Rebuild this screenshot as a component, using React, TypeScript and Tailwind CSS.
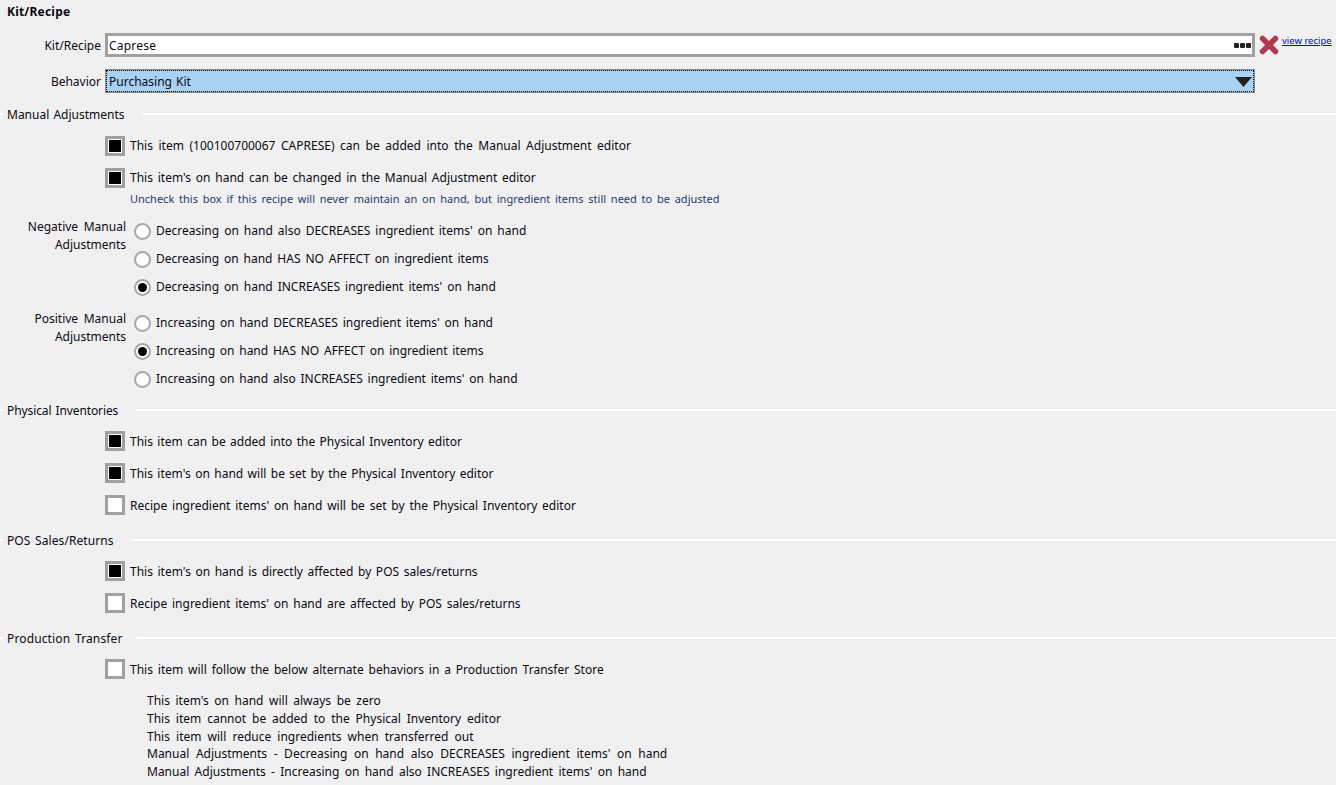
import type { ReactNode } from "react";

function SectionHeader({
  title,
  className,
  titleClass,
  lineClass = "ml-[17px]",
}: {
  title: string;
  className: string;
  titleClass: string;
  lineClass?: string;
}) {
  return (
    <div className={`flex h-5 items-center ${className}`}>
      <div className="h-[2px] w-[3px] bg-white" />
      <span className={`ml-1 shrink-0 pt-[2px] ${titleClass}`}>{title}</span>
      <div className={`h-[2px] flex-1 bg-white ${lineClass}`} />
    </div>
  );
}

function CheckRow({
  checked,
  textClass,
  children,
}: {
  checked?: boolean;
  textClass: string;
  children: ReactNode;
}) {
  return (
    <div className="flex h-8 items-center pl-[105px]">
      <div className="flex size-5 items-center justify-center border-[3px] border-[#a0a0a0] bg-white">
        {checked && <div className="size-3 bg-black" />}
      </div>
      <span className={`ml-[5px] ${textClass}`}>{children}</span>
    </div>
  );
}

function RadioRow({
  checked,
  textClass,
  children,
}: {
  checked?: boolean;
  textClass: string;
  children: ReactNode;
}) {
  return (
    <div className="flex h-7 items-center">
      <div className="flex size-[17px] items-center justify-center rounded-full border-2 border-[#a8a8a8] bg-white">
        {checked && <div className="size-[9px] rounded-full bg-black" />}
      </div>
      <span className={`ml-[5px] ${textClass}`}>{children}</span>
    </div>
  );
}

function RadioGroup({
  label,
  options,
  selected,
  className,
}: {
  label: string[];
  options: { text: string; textClass: string }[];
  selected: number;
  className: string;
}) {
  return (
    <div className={`flex ${className}`}>
      <div className="w-[126px] pt-[1px] text-right leading-[18px] [word-spacing:2.5px]">
        {label.map((line) => (
          <div key={line}>{line}</div>
        ))}
      </div>
      <div className="ml-2 flex flex-col">
        {options.map((option, i) => (
          <RadioRow key={option.text} checked={i === selected} textClass={option.textClass}>
            {option.text}
          </RadioRow>
        ))}
      </div>
    </div>
  );
}

export default function App() {
  return (
    <div className="flex h-[785px] w-[1336px] flex-col overflow-hidden bg-[#f0f0f0] font-['Noto_Sans',sans-serif] text-[12px] text-[#0a0a14]">
      <div className="flex h-[22px] items-center pl-[7px] pt-[2px] font-bold tracking-[0.2px]">Kit/Recipe</div>

      <div className="mt-[11px] flex h-6 items-center">
        <span className="w-[101px] pt-[2px] text-right">Kit/Recipe</span>
        <div className="ml-1 flex h-6 w-[1150px] items-center justify-between border-[3px] border-[#a0a0a0] bg-white pl-[1px] pr-[1px]">
          <span className="pt-[2px] tracking-[0.2px]">Caprese</span>
          <div className="flex gap-[1px]">
            <div className="size-[5px] rounded-[1px] bg-[#222]" />
            <div className="size-[5px] rounded-[1px] bg-[#222]" />
            <div className="size-[5px] rounded-[1px] bg-[#222]" />
          </div>
        </div>
        <svg className="ml-1 size-5" viewBox="0 0 20 20">
          <path d="M3.5 3.5 L16.5 16.5 M16.5 3.5 L3.5 16.5" stroke="#b23a50" strokeWidth="5.5" strokeLinecap="round" />
        </svg>
        <a className="ml-[3px] -mt-[7px] text-[9.5px] text-[#0000ee] underline" href="#">
          view recipe
        </a>
      </div>

      <div className="mt-3 flex h-6 items-center">
        <span className="w-[101px] pt-[2px] text-right">Behavior</span>
        <div className="ml-1 flex h-6 w-[1150px] items-center justify-between border border-[#8a8a8a] bg-[#a8d1f2]">
          <div className="flex h-full w-full items-center justify-between border border-dotted border-black pl-[2px] pr-[1px]">
            <span className="pt-[2px] [word-spacing:1px]">Purchasing Kit</span>
            <svg className="mt-[1px] h-[10px] w-[17px]" viewBox="0 0 17 10">
              <path d="M0 0 H17 L8.5 10 Z" fill="#222" />
            </svg>
          </div>
        </div>
      </div>

      <SectionHeader title="Manual Adjustments" titleClass="[word-spacing:1px]" className="mt-[11px]" />
      <div className="mt-[6px]">
        <CheckRow checked textClass="[word-spacing:2.45px]">
          This item (100100700067 CAPRESE) can be added into the Manual Adjustment editor
        </CheckRow>
        <CheckRow checked textClass="[word-spacing:1.65px]">
          This item's on hand can be changed in the Manual Adjustment editor
        </CheckRow>
      </div>
      <div className="-mt-[3px] h-4 pl-[130px] text-[11px] leading-4 text-[#1f3a6e] [word-spacing:1.9px]">
        Uncheck this box if this recipe will never maintain an on hand, but ingredient items still need to be adjusted
      </div>

      <RadioGroup
        className="mt-[10px]"
        label={["Negative Manual", "Adjustments"]}
        selected={2}
        options={[
          { text: "Decreasing on hand also DECREASES ingredient items' on hand", textClass: "[word-spacing:1.9px]" },
          { text: "Decreasing on hand HAS NO AFFECT on ingredient items", textClass: "[word-spacing:1.75px]" },
          { text: "Decreasing on hand INCREASES ingredient items' on hand", textClass: "[word-spacing:1.85px]" },
        ]}
      />
      <RadioGroup
        className="mt-2"
        label={["Positive Manual", "Adjustments"]}
        selected={1}
        options={[
          { text: "Increasing on hand DECREASES ingredient items' on hand", textClass: "[word-spacing:1.7px]" },
          { text: "Increasing on hand HAS NO AFFECT on ingredient items", textClass: "[word-spacing:1.6px]" },
          { text: "Increasing on hand also INCREASES ingredient items' on hand", textClass: "[word-spacing:1.6px]" },
        ]}
      />

      <SectionHeader title="Physical Inventories" titleClass="tracking-[-0.1px] [word-spacing:1px]" className="mt-[7px]" />
      <div className="mt-[5px]">
        <CheckRow checked textClass="pt-[2px] [word-spacing:1.3px]">
          This item can be added into the Physical Inventory editor
        </CheckRow>
        <CheckRow checked textClass="pt-[2px] [word-spacing:1.3px]">
          This item's on hand will be set by the Physical Inventory editor
        </CheckRow>
        <CheckRow textClass="pt-[2px] [word-spacing:1.7px]">
          Recipe ingredient items' on hand will be set by the Physical Inventory editor
        </CheckRow>
      </div>

      <SectionHeader title="POS Sales/Returns" titleClass="tracking-[0.07px] [word-spacing:1.5px]" className="mt-[9px]" />
      <div className="mt-[5px]">
        <CheckRow checked textClass="pt-[2px] [word-spacing:1.45px]">
          This item's on hand is directly affected by POS sales/returns
        </CheckRow>
        <CheckRow textClass="pt-[2px] [word-spacing:1.65px]">
          Recipe ingredient items' on hand are affected by POS sales/returns
        </CheckRow>
      </div>

      <SectionHeader
        title="Production Transfer"
        titleClass="tracking-[0.13px] [word-spacing:1.5px]"
        lineClass="ml-[14px]"
        className="mt-[9px]"
      />
      <div className="mt-[5px]">
        <CheckRow textClass="pt-[2px] [word-spacing:1.75px]">
          This item will follow the below alternate behaviors in a Production Transfer Store
        </CheckRow>
      </div>

      <div className="mt-[7px] pl-[147px] leading-[17.75px]">
        <div className="[word-spacing:2.4px]">This item's on hand will always be zero</div>
        <div className="[word-spacing:2.8px]">This item cannot be added to the Physical Inventory editor</div>
        <div className="[word-spacing:3px]">This item will reduce ingredients when transferred out</div>
        <div className="[word-spacing:3.5px]">
          Manual Adjustments - Decreasing on hand also DECREASES ingredient items' on hand
        </div>
        <div className="[word-spacing:2.2px]">
          Manual Adjustments - Increasing on hand also INCREASES ingredient items' on hand
        </div>
      </div>
    </div>
  );
}
